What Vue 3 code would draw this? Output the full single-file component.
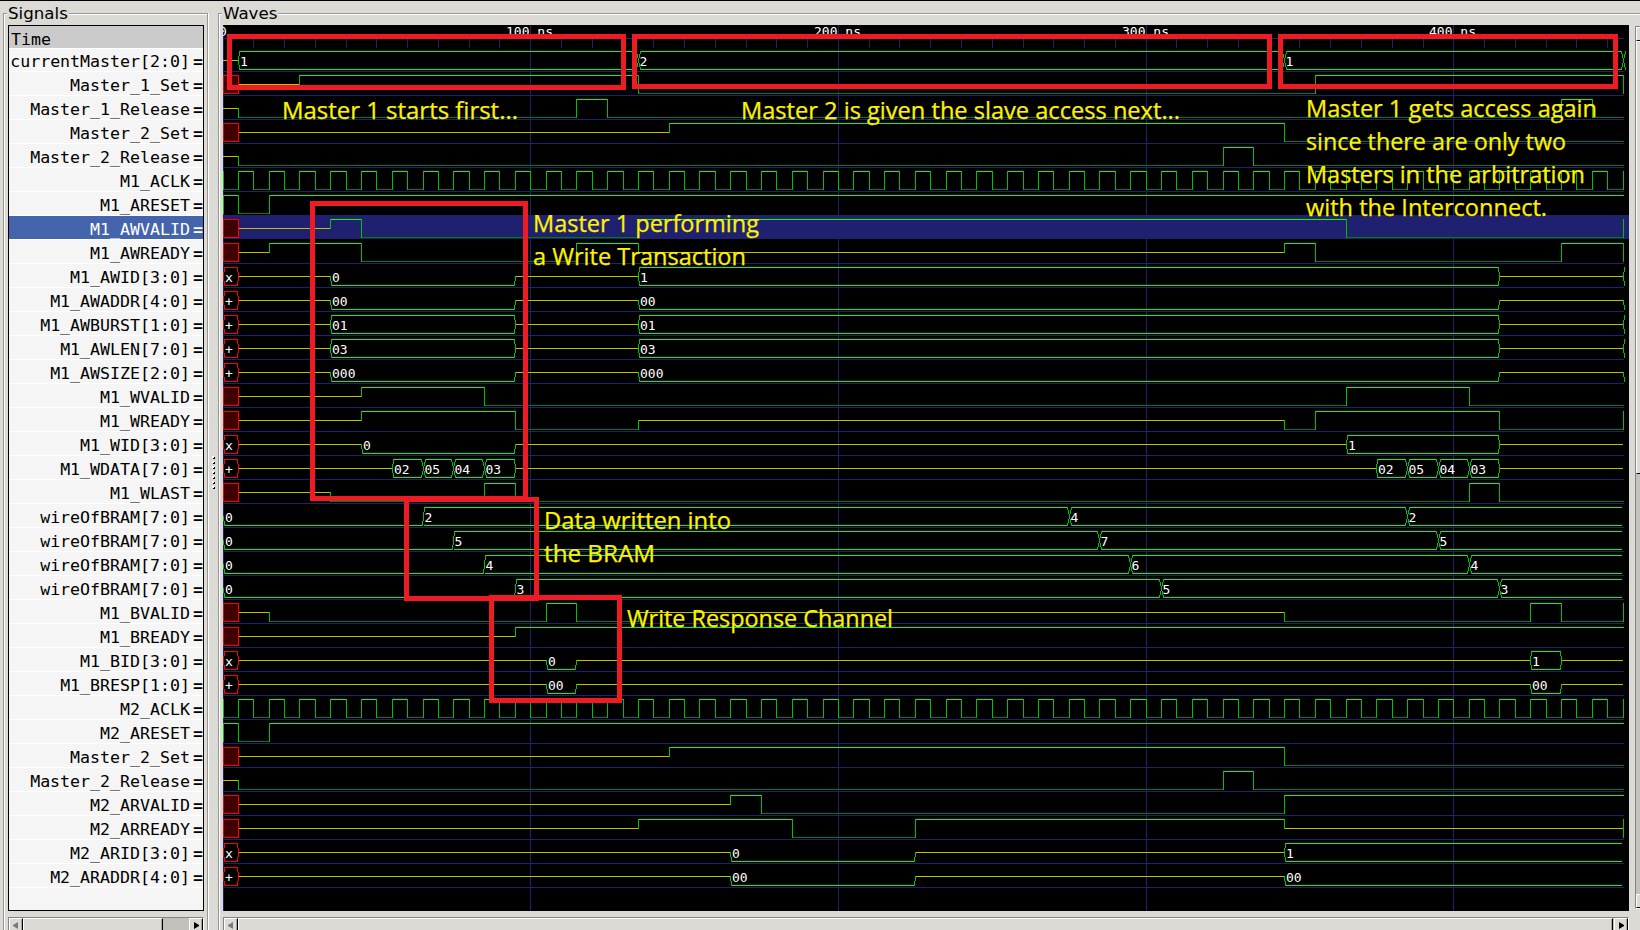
<script setup>
// Signal kinds: "bit" segments are [level, start]; "bus" segments are [value, start].
// Levels: x unknown, z floating, 1 high, 0 low. `end` marks a change at the last sample.
const END = 455
const clock = () => {
  const out = [['0', 0]]
  for (let t = 5; t < END; t += 5) out.push([t % 10 ? '1' : '0', t])
  return out
}
const bit = (name, spec, end = null, lead = false) => ({
  name, kind: 'bit', end, lead,
  segs: typeof spec === 'string' ? spec.split(' ').map(p => p.split('@')).map(([v, t]) => [v, +t]) : spec,
})
const bus = (name, spec, end = null) => ({
  name, kind: 'bus', end, segs: spec.split(' ').map(p => p.split('@')).map(([v, t]) => [v, +t]),
})

const signals = [
  bus('currentMaster[2:0]', 'z@0 1@5 2@135 1@345', 'cross'),
  bit('Master_1_Set', 'x@0 z@5 1@25 0@135 1@355', 'full'),
  bit('Master_1_Release', 'z@0 0@5 1@115 0@125 1@435 0@445'),
  bit('Master_2_Set', 'x@0 z@5 1@145 0@345'),
  bit('Master_2_Release', 'z@0 0@5 1@325 0@335'),
  bit('M1_ACLK', clock(), 'full', true),
  bit('M1_ARESET', '1@0 0@5 1@15', null, true),
  bit('M1_AWVALID', 'x@0 z@5 1@35 0@45 1@135 0@365', 'full'),
  bit('M1_AWREADY', 'x@0 z@5 1@15 0@45 1@115 z@135 1@345 0@355 1@435', 'full'),
  bus('M1_AWID[3:0]', 'x@0 z@5 0@35 z@95 1@135 z@415', 'open'),
  bus('M1_AWADDR[4:0]', '+@0 z@5 00@35 z@95 00@135 z@415', 'low'),
  bus('M1_AWBURST[1:0]', '+@0 z@5 01@35 z@95 01@135 z@415', 'open'),
  bus('M1_AWLEN[7:0]', '+@0 z@5 03@35 z@95 03@135 z@415', 'open'),
  bus('M1_AWSIZE[2:0]', '+@0 z@5 000@35 z@95 000@135 z@415', 'low'),
  bit('M1_WVALID', 'x@0 z@5 1@45 0@85 1@365 0@405'),
  bit('M1_WREADY', 'x@0 z@5 1@45 0@95 z@135 0@345 1@355 0@415', 'full'),
  bus('M1_WID[3:0]', 'x@0 z@5 0@45 z@95 1@365 z@415'),
  bus('M1_WDATA[7:0]', '+@0 z@5 02@55 05@65 04@75 03@85 z@95 02@375 05@385 04@395 03@405 z@415'),
  bit('M1_WLAST', 'x@0 z@5 0@35 1@85 0@95 1@405 0@415'),
  bus('wireOfBRAM[7:0]', '0@0 2@65 4@275 2@385'),
  bus('wireOfBRAM[7:0]', '0@0 5@75 7@285 5@395'),
  bus('wireOfBRAM[7:0]', '0@0 4@85 6@295 4@405'),
  bus('wireOfBRAM[7:0]', '0@0 3@95 5@305 3@415'),
  bit('M1_BVALID', 'x@0 z@5 0@15 1@105 0@115 z@135 0@345 1@425 0@435', 'full'),
  bit('M1_BREADY', 'x@0 z@5 1@95'),
  bus('M1_BID[3:0]', 'x@0 z@5 0@105 z@115 1@425 z@435'),
  bus('M1_BRESP[1:0]', '+@0 z@5 00@105 z@115 00@425 z@435'),
  bit('M2_ACLK', clock(), 'full', true),
  bit('M2_ARESET', '1@0 0@5 1@15', null, true),
  bit('Master_2_Set', 'x@0 z@5 1@145 0@345'),
  bit('Master_2_Release', 'z@0 0@5 1@325 0@335'),
  bit('M2_ARVALID', 'x@0 z@5 1@165 0@175 1@345'),
  bit('M2_ARREADY', 'x@0 z@5 1@135 0@185 1@225 z@345', 'full'),
  bus('M2_ARID[3:0]', 'x@0 z@5 0@165 z@225 1@345'),
  bus('M2_ARADDR[4:0]', '+@0 z@5 00@165 z@225 00@345'),
]
const SELECTED = 7

const xAt = t => Math.floor(223 + (t * 40) / 13 + 1e-6)
const isZero = v => /^0+$/.test(v)
const isUnknown = v => v === 'x' || v === '+'

function draw(sig, row) {
  const top = 51 + 24 * row, mid = top + 9, low = top + 18
  const p = { hi: '', lo: '', edge: '', z: '', red: '', fill: '' }
  const texts = []
  const h = (k, a, b, y) => { if (b >= a) p[k] += `M${a} ${y}h${b - a + 1}v1H${a}z` }
  const v = (k, x, a, b) => { p[k] += `M${x} ${Math.min(a, b)}h1v${Math.abs(b - a) + 1}h-1z` }
  // Half slope between the middle line and an outer rail; dir is +1 opening, -1 closing.
  const half = (k, x, dir, up) => {
    const s = up ? -1 : 1
    v(k, x, mid, mid + 4 * s)
    v(k, x + dir, mid + 5 * s, mid + 9 * s)
  }
  const slope = (x, from, to, w) => {
    const cols = 2 * w
    for (let i = 0; i <= 18; i++) {
      const y = from + Math.sign(to - from) * i
      v('edge', x - w + Math.round((i * cols) / 18), y, y)
    }
  }
  const level = { 1: top, 0: low, z: mid }

  if (sig.kind === 'bit') {
    sig.segs.forEach(([val, t], i) => {
      const next = sig.segs[i + 1]
      const a = xAt(t), b = xAt(next ? next[1] : END)
      if (val === 'x') {
        p.fill += `M${a} ${top}H${b + 1}V${low + 1}H${a}z`
        h('red', a, b, top); h('red', a, b, low); v('red', a, top, low); v('red', b, top, low)
        return
      }
      h(val === '1' ? 'hi' : val === '0' ? 'lo' : 'z', a + (i && sig.segs[i - 1][0] === 'x' ? 1 : 0), b, level[val])
      if (next) v('edge', b, level[val], level[next[0]])
    })
    if (sig.lead) v('edge', 223, top, low)
    if (sig.end) v('edge', xAt(END), top, low)
    return { p, texts }
  }

  sig.segs.forEach(([val, t], i) => {
    const prev = sig.segs[i - 1], next = sig.segs[i + 1]
    const a = xAt(t), b = xAt(next ? next[1] : END)
    if (val === 'z') { h('z', a + (i ? 1 : 0), b - 1, mid); return }
    texts.push({ x: a + 2 - (prev && prev[0] !== 'z' ? 0.5 : 0), y: top + 15, s: val })
    if (isUnknown(val)) {
      h('red', a + 1, b - 1, top); h('red', a + 1, b - 1, low)
      half('red', a, 1, true); half('red', a, 1, false); half('red', b, -1, true); half('red', b, -1, false)
      return
    }
    const zero = isZero(val)
    const fromZ = !prev || prev[0] === 'z', toZ = next && next[0] === 'z'
    const L = fromZ ? a + 1 : isZero(prev[0]) ? a + 1 : a + 2
    const R = toZ ? b - 1 : b - 2
    h('hi', L, R, low)
    if (!zero) h('hi', L, R, top)
    if (fromZ) { half('edge', a, 1, false); if (!zero) half('edge', a, 1, true) }
    if (toZ) { half('edge', b, -1, false); if (!zero) half('edge', b, -1, true) }
    if (next && !toZ) {
      if (zero) slope(b, low, top, 1)
      else { slope(b, low, top, 2); slope(b, top, low, 2) }
    }
  })
  const e = xAt(END)
  if (sig.end === 'cross') { slope(e, low, top, 2); slope(e, top, low, 2) }
  if (sig.end === 'open') { half('edge', e, 1, true); half('edge', e, 1, false) }
  if (sig.end === 'low') half('edge', e, 1, false)
  return { p, texts }
}

const traces = signals.map(draw)
const KINDS = ['fill', 'z', 'lo', 'hi', 'edge', 'red']
const majors = [0, 100, 200, 300, 400]
const ticks = Array.from({ length: 45 }, (_, i) => (i + 1) * 10).filter(t => t % 100)

const boxes = [
  [227, 34, 626, 90], [632, 34, 1272, 89], [1278, 34, 1618, 89],
  [310, 201, 528, 501], [404, 497, 539, 601], [489, 595, 622, 703],
]
const notes = [
  [282, 119, 236, 'Master 1 starts first...'],
  [741, 119, 439, 'Master 2 is given the slave access next...'],
  [1306, 117, 291, 'Master 1 gets access again'],
  [1306, 150, 260, 'since there are only two'],
  [1306, 183, 279, 'Masters in the arbitration'],
  [1306, 216, 241, 'with the Interconnect.'],
  [533, 232, 226, 'Master 1 performing'],
  [533, 265, 213, 'a Write Transaction'],
  [544, 529, 187, 'Data written into'],
  [544, 562, 111, 'the BRAM'],
  [627, 627, 266, 'Write Response Channel'],
]
</script>

<template>
  <div class="viewer">
    <section class="frame signals">
      <h2 class="title">Signals</h2>
      <div class="list">
        <div class="time">Time</div>
        <div v-for="(s, i) in signals" :key="i" class="row" :class="{ first: i === 0, selected: i === SELECTED }">
          <span class="name">{{ s.name }}</span><span class="eq">=</span>
        </div>
      </div>
      <div class="hbar">
        <div class="btn start"><svg width="6" height="7"><path class="dim" d="M5 0v7L0 4V3z" /></svg></div>
        <div class="thumb"></div>
        <div class="btn stop"><svg width="5" height="7"><path d="M0 0v7L5 4V3z" /></svg></div>
      </div>
    </section>

    <div class="grip"><i v-for="n in 7" :key="n"></i></div>

    <section class="frame waves">
      <h2 class="title">Waves</h2>
      <div class="body">
        <div class="main">
          <svg class="canvas" width="1406" height="886" viewBox="223 25 1406 886">
            <g class="grid">
              <rect v-for="t in majors" :key="t" :x="xAt(t)" y="25" width="1" height="886" />
              <rect v-for="t in ticks" :key="t" :x="xAt(t)" y="39" width="1" height="9" />
              <rect x="223" y="38" width="1401" height="1" />
              <template v-for="(s, i) in signals" :key="i">
                <rect v-if="i !== SELECTED" x="224" :y="71 + 24 * i" width="1400" height="1" />
              </template>
              <rect x="223" :y="47 + 24 * SELECTED" width="1406" height="24" />
            </g>
            <text v-for="t in majors" :key="t" class="val" :x="t ? xAt(t) - 24 : 219" y="36">{{ t ? t + ' ns' : '0' }}</text>
            <g v-for="(tr, i) in traces" :key="i">
              <path v-for="k in KINDS" :key="k" :class="k" :d="tr.p[k]" />
              <text v-for="(x, j) in tr.texts" :key="j" class="val" :x="x.x" :y="x.y">{{ x.s }}</text>
            </g>
            <rect
              v-for="(b, i) in boxes" :key="i" class="mark"
              :x="b[0] + 2.5" :y="b[1] + 2.5" :width="b[2] - b[0] - 5" :height="b[3] - b[1] - 5"
            />
            <text
              v-for="n in notes" :key="n[3]" class="note" :x="n[0]" :y="n[1]"
              :textLength="n[2]" lengthAdjust="spacingAndGlyphs"
            >{{ n[3] }}</text>
          </svg>
          <div class="hbar wide">
            <div class="btn start"><svg width="6" height="7"><path class="dim" d="M5 0v7L0 4V3z" /></svg></div>
            <div class="thumb"></div>
            <div class="btn stop"><svg width="5" height="7"><path d="M0 0v7L5 4V3z" /></svg></div>
          </div>
        </div>
        <div class="vbar">
          <div class="vbtn"></div>
          <div class="vthumb"></div>
          <div class="trough"></div>
          <div class="vbtn bottom"></div>
        </div>
      </div>
    </section>
  </div>
</template>

<style>
body { overflow: hidden; }
</style>

<style scoped>
.viewer {
  box-sizing: border-box;
  width: 1640px;
  height: 930px;
  overflow: hidden;
  display: flex;
  background: #dcdad5;
  border-top: 1px solid #000;
  color: #000;
}
.frame {
  box-sizing: border-box;
  flex: none;
  height: 930px;
  margin-top: 12px;
  border: 1px solid #98968f;
  box-shadow: inset 1px 1px #fff, 1px 0 #fff;
  padding-left: 4px;
}
.signals { width: 205px; margin-left: 3px; }
.waves { width: 1440px; }
.title {
  width: max-content;
  height: 23px;
  margin: -12px 0 0 -1px;
  padding: 0 1px;
  background: #dcdad5;
  font: 16.67px/19px "DejaVu Sans", sans-serif;
  padding-top: 2px;
  box-sizing: border-box;
}
.list {
  box-sizing: border-box;
  width: 196px;
  height: 886px;
  border: 1px solid #000;
  background: #f5f5f5;
  overflow: hidden;
  font: 16.6px/24px "DejaVu Sans Mono", monospace;
}
.time {
  box-sizing: border-box;
  height: 23px;
  padding-left: 2px;
  line-height: 28px;
  background: #cbcbcb;
  border-bottom: 1px solid #fff;
}
.row {
  box-sizing: border-box;
  height: 24px;
  display: flex;
  justify-content: flex-end;
  border-bottom: 1px solid #fff;
  white-space: nowrap;
}
.row.first { height: 23px; }
.row.first span { margin-top: -1px; }
.row.selected { background: #4464ac; color: #fff; }
.name { line-height: 28px; height: 23px; }
.eq { width: 10px; margin-left: 3px; font-weight: bold; line-height: 28px; height: 23px; overflow: hidden; }

.hbar {
  box-sizing: border-box;
  width: 196px;
  height: 20px;
  margin-top: 6px;
  display: flex;
  background: #c3c1bc;
  border: 1px solid #868480;
  border-right-color: #fff;
}
.wide { width: 1406px; }
.btn, .thumb {
  box-sizing: border-box;
  background: #dcdad5;
  border-top: 1px solid #fff;
  border-left: 1px solid #fff;
  border-right: 1px solid #000;
  box-shadow: inset -1px 0 #a8a6a1;
}
.btn { width: 14px; flex: none; padding: 3px 0 0 3px; }
.btn svg { display: block; }
.stop { padding-left: 4px; margin-left: auto; }
.dim { fill: #7c7a76; }
.thumb { width: 140px; }
.wide .thumb { width: auto; flex: 1; margin-right: 1px; }
.wide .stop { margin-left: 0; }

.grip { flex: none; width: 10px; padding: 455px 0 0 4px; box-sizing: border-box; }
.grip i { display: block; width: 2px; height: 2px; margin-bottom: 3px; background: #fff; box-shadow: 1px 1px #000; }

.body { display: flex; gap: 6px; }
.main { width: 1406px; flex: none; }
.canvas { display: block; background: #000; }
.vbar {
  box-sizing: border-box;
  width: 20px;
  height: 883px;
  margin-top: 1px;
  border: 1px solid #868480;
  border-bottom-color: #fff;
  display: flex;
  flex-direction: column;
}
.vbtn, .vthumb {
  box-sizing: border-box;
  flex: none;
  background: #dcdad5;
  border: 1px solid #fff;
  border-bottom: 1px solid #000;
}
.vbtn { height: 14px; }
.vthumb { height: 433px; }
.trough { flex: 1; background: #c3c1bc; }

.grid rect { fill: #202070; }
.canvas path { shape-rendering: crispEdges; }
.hi { fill: #00ff00; }
.lo { fill: #008000; }
.edge { fill: #00c000; }
.z { fill: #c0c000; }
.red { fill: #ff0000; }
.fill { fill: #400000; }
.val { fill: #fff; font: 13px "DejaVu Sans Mono", monospace; }
.mark { fill: none; stroke: #ed1c24; stroke-width: 5; }
.note { fill: #fff200; stroke: #fff200; stroke-width: 0.25; font: 23px "Open Sans", "Noto Sans", sans-serif; }
</style>
